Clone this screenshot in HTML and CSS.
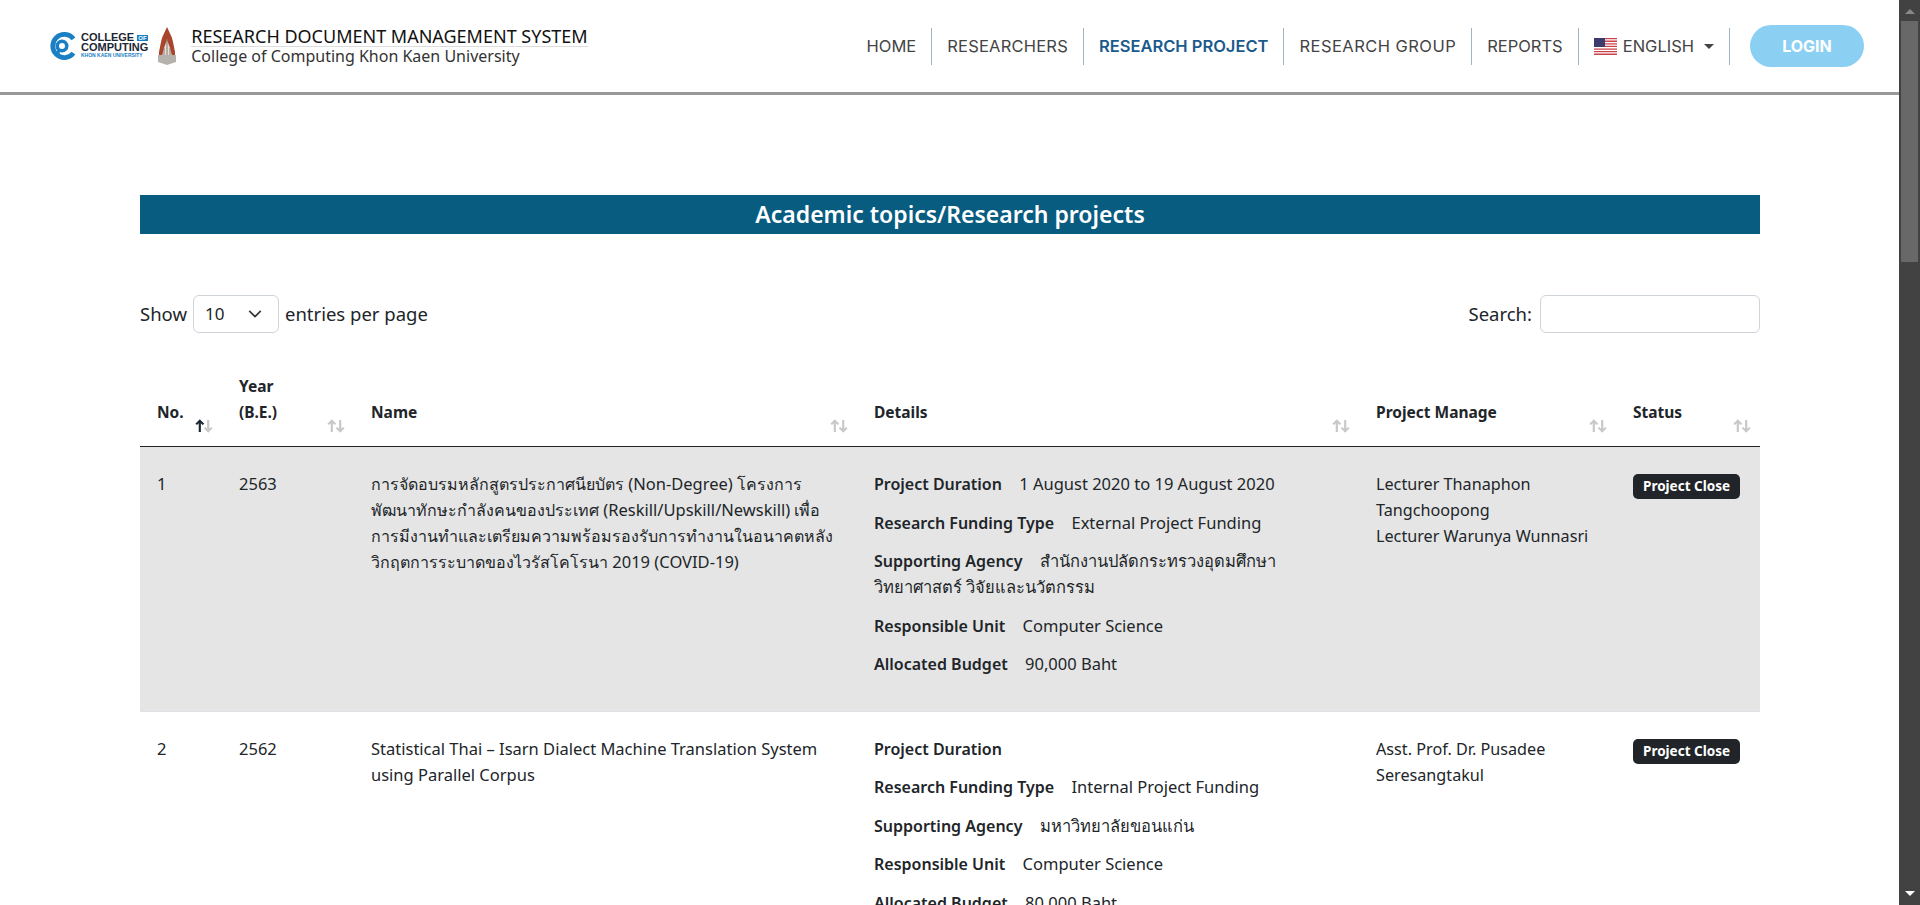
FILE: index.html
```html
<!DOCTYPE html>
<html lang="en">
<head>
  <meta charset="UTF-8" />
  <meta name="viewport" content="width=device-width, initial-scale=1.0" />
  <title>Research Document Management System</title>
  <link rel="stylesheet" href="styles.css">
</head>
<body>
  <header class="topbar">
    <div class="brand">
      <svg class="logo-ring" width="30" height="28" viewBox="0 0 29 27">
        <path d="M25.6 6.6 A11.2 11.2 0 1 0 25.6 20.4" fill="none" stroke="#1b7fc4" stroke-width="4.6"/>
        <circle cx="14.5" cy="13.5" r="4.6" fill="none" stroke="#1b7fc4" stroke-width="3.4"/>
        <path d="M11 17 L11 22" stroke="#1b7fc4" stroke-width="2.6"/>
      </svg>
      <div class="logo-words">
        <span class="logo-line">COLLEGE <em>OF</em></span>
        <span class="logo-line">COMPUTING</span>
        <span class="logo-sub">KHON KAEN UNIVERSITY</span>
      </div>
      <svg class="logo-temple" width="18" height="38" viewBox="0 0 18 38">
        <path d="M9 0 C11 5 14 9 15 15 L17 25 L17 31 L1 31 L1 25 L3 15 C4 9 7 5 9 0 Z" fill="#a9452c"/>
        <path d="M9 13 L12 21 L14 29 L4 29 L6 21 Z" fill="#e6dfd6"/>
        <path d="M9 12 V29 M6 21 V29 M12 21 V29" stroke="#85786e" stroke-width="1"/>
        <path d="M0 28 H18 V35 L9 38 L0 35 Z" fill="#b5b2ad"/>
      </svg>
      <div class="brand-text">
        <div class="brand-title">RESEARCH DOCUMENT MANAGEMENT SYSTEM</div>
        <div class="brand-sub">College of Computing Khon Kaen University</div>
      </div>
    </div>
    <nav class="mainnav">
      <a class="navlink" href="#">HOME</a>
      <a class="navlink researchers" href="#">RESEARCHERS</a>
      <a class="navlink active" href="#">RESEARCH PROJECT</a>
      <a class="navlink group" href="#">RESEARCH GROUP</a>
      <a class="navlink" href="#">REPORTS</a>
      <a class="navlink lang" href="#">
        <svg width="23" height="17" viewBox="0 0 23 17">
          <rect width="23" height="17" fill="#fff"/>
          <path d="M0 .65H23M0 3.25H23M0 5.85H23M0 8.45H23M0 11.05H23M0 13.65H23M0 16.25H23" stroke="#c9434f" stroke-width="1.3"/>
          <rect width="11" height="9" fill="#3c3b6e"/>
        </svg>
        ENGLISH <span class="caret"></span>
      </a>
    </nav>
    <button class="loginbtn" type="button">LOGIN</button>
  </header>

  <main class="content">
    <h1 class="pagetitle">Academic topics/Research projects</h1>

    <div class="tools">
      <label class="perpage">Show
        <span class="fakeselect">10
          <svg width="14" height="14" viewBox="0 0 16 16"><path d="M2 5l6 6 6-6" fill="none" stroke="#343a40" stroke-width="2" stroke-linecap="round" stroke-linejoin="round"/></svg>
        </span>
        entries per page</label>
      <label class="search">Search: <input type="text" /></label>
    </div>

    <table class="projects">
      <thead>
        <tr>
          <th class="col-no">No.
            <svg class="sort" width="18" height="14" viewBox="0 0 15 13" preserveAspectRatio="none"><path class="up on" d="M4 12V2M1 5l3-3.5L7 5"/><path class="down" d="M11 1v10M8 8l3 3.5L14 8"/></svg>
          </th>
          <th class="col-year">Year (B.E.)
            <svg class="sort" width="18" height="14" viewBox="0 0 15 13" preserveAspectRatio="none"><path class="up" d="M4 12V2M1 5l3-3.5L7 5"/><path class="down" d="M11 1v10M8 8l3 3.5L14 8"/></svg>
          </th>
          <th class="col-name">Name
            <svg class="sort" width="18" height="14" viewBox="0 0 15 13" preserveAspectRatio="none"><path class="up" d="M4 12V2M1 5l3-3.5L7 5"/><path class="down" d="M11 1v10M8 8l3 3.5L14 8"/></svg>
          </th>
          <th class="col-details">Details
            <svg class="sort" width="18" height="14" viewBox="0 0 15 13" preserveAspectRatio="none"><path class="up" d="M4 12V2M1 5l3-3.5L7 5"/><path class="down" d="M11 1v10M8 8l3 3.5L14 8"/></svg>
          </th>
          <th class="col-manage">Project Manage
            <svg class="sort" width="18" height="14" viewBox="0 0 15 13" preserveAspectRatio="none"><path class="up" d="M4 12V2M1 5l3-3.5L7 5"/><path class="down" d="M11 1v10M8 8l3 3.5L14 8"/></svg>
          </th>
          <th class="col-status">Status
            <svg class="sort" width="18" height="14" viewBox="0 0 15 13" preserveAspectRatio="none"><path class="up" d="M4 12V2M1 5l3-3.5L7 5"/><path class="down" d="M11 1v10M8 8l3 3.5L14 8"/></svg>
          </th>
        </tr>
      </thead>
      <tbody>
        <tr class="odd">
          <td>1</td>
          <td>2563</td>
          <td class="name-lines"><span class="th">การจัดอบรมหลักสูตรประกาศนียบัตร</span> (Non-Degree) <span class="th">โครงการ</span><br>
            <span class="th">พัฒนาทักษะกำลังคนของประเทศ</span> (Reskill/Upskill/Newskill) <span class="th">เพื่อ</span><br>
            <span class="th">การมีงานทำและเตรียมความพร้อมรองรับการทำงานในอนาคตหลัง</span><br>
            <span class="th">วิกฤตการระบาดของไวรัสโคโรนา</span> 2019 (COVID-19)</td>
          <td>
            <p><b>Project Duration</b> 1 August 2020 to 19 August 2020</p>
            <p><b>Research Funding Type</b> External Project Funding</p>
            <p><b>Supporting Agency</b> <span class="th">สำนักงานปลัดกระทรวงอุดมศึกษา<br>วิทยาศาสตร์ วิจัยและนวัตกรรม</span></p>
            <p><b>Responsible Unit</b> Computer Science</p>
            <p><b>Allocated Budget</b> 90,000 Baht</p>
          </td>
          <td class="manager">Lecturer Thanaphon Tangchoopong<br>Lecturer Warunya Wunnasri</td>
          <td><span class="badge">Project Close</span></td>
        </tr>
        <tr>
          <td>2</td>
          <td>2562</td>
          <td>Statistical Thai – Isarn Dialect Machine Translation System using Parallel Corpus</td>
          <td>
            <p><b>Project Duration</b></p>
            <p><b>Research Funding Type</b> Internal Project Funding</p>
            <p><b>Supporting Agency</b> <span class="th">มหาวิทยาลัยขอนแก่น</span></p>
            <p><b>Responsible Unit</b> Computer Science</p>
            <p><b>Allocated Budget</b> 80,000 Baht</p>
          </td>
          <td class="manager">Asst. Prof. Dr. Pusadee Seresangtakul</td>
          <td><span class="badge">Project Close</span></td>
        </tr>
      </tbody>
    </table>
  </main>

  <div class="scrollbar">
    <span class="sb-up"></span>
    <span class="sb-thumb"></span>
    <span class="sb-down"></span>
  </div>
</body>
</html>
```

FILE: styles.css
```css
html { height: 100%; }
body { margin: 0; padding-right: 21px; font-family: "Noto Sans", "Noto Sans CJK SC", sans-serif; font-size: 16.5px; line-height: 1.5; color: #212529; background: #fff; }

.topbar { display: flex; align-items: center; height: 92px; padding: 0 35px 0 47px; border-bottom: 3px solid #999; }
.brand { display: flex; align-items: center; flex: 1; }
.logo-words { display: flex; flex-direction: column; margin-left: 4px; font-family: "Liberation Sans", sans-serif; font-weight: bold; color: #1d2733; line-height: 9px; font-size: 11px; }
.logo-line em { font-style: normal; font-size: 6px; color: #fff; background: #1b7fc4; padding: 0 1px; vertical-align: 1px; }
.logo-sub { font-size: 5px; line-height: 7px; color: #1b7fc4; white-space: nowrap; }
.logo-temple { margin: 0 15px 0 10px; }
.brand-title { font-size: 18px; line-height: 19px; color: #111; border-bottom: 1px solid #ddd; }
.brand-sub { font-size: 16px; line-height: 18px; color: #333; }

.mainnav { display: flex; align-items: center; }
.navlink { display: flex; align-items: center; height: 37px; padding: 0 15px; border-right: 1px solid #9db4c4; color: #444; font-family: Inter, sans-serif; font-size: 16.5px; text-decoration: none; }
.navlink.active { color: #1a5a8c; font-weight: 600; }
.navlink.researchers { letter-spacing: .2px; }
.navlink.group { letter-spacing: .45px; }
.lang svg { margin-right: 6px; }
.caret { margin-left: 10px; border-top: 5px solid #444; border-left: 5px solid transparent; border-right: 5px solid transparent; }
.loginbtn { width: 114px; height: 42px; margin-left: 20px; border: none; border-radius: 21px; background: #8bd0f2; color: #fff; font-family: Inter, sans-serif; font-size: 16px; font-weight: 700; }

.content { padding: 100px 139px 0 140px; }
.pagetitle { margin: 0; height: 39px; background: #085c80; color: #fff; font-size: 23px; font-weight: 600; line-height: 39px; text-align: center; }
.tools { display: flex; justify-content: space-between; align-items: center; margin-top: 61px; }
.perpage, .search { display: flex; align-items: center; gap: 6px; font-size: 18.5px; }
.search { gap: 8px; }
.fakeselect { display: flex; align-items: center; justify-content: space-between; box-sizing: border-box; width: 86px; height: 38px; padding: 0 16px 0 11px; border: 1px solid #ced4da; border-radius: 6px; font-size: 17px; }
.search input { box-sizing: border-box; width: 220px; height: 38px; border: 1px solid #ced4da; border-radius: 6px; }

.projects { width: 100%; margin-top: 32px; border-collapse: collapse; table-layout: fixed; }
.projects th { position: relative; box-sizing: border-box; padding: 8px 40px 21px 17px; border-bottom: 1px solid #212529; font-size: 15.5px; font-weight: 700; text-align: left; vertical-align: bottom; line-height: 26px; }
.sort { position: absolute; right: 9px; bottom: 13px; }
.sort path { fill: none; stroke: #c8c8c8; stroke-width: 1.8; }
.sort path.on { stroke: #1d2733; }
.col-no { width: 82px; }
.col-year { width: 132px; }
.col-name { width: 503px; }
.col-details { width: 502px; }
.col-manage { width: 257px; }
.projects td { padding: 24px 17px 21px; border-bottom: 1px solid #dee2e6; vertical-align: top; line-height: 26px; }
.projects td.name-lines { white-space: nowrap; }
.projects td.manager { font-size: 16.2px; }
.odd td { background: #e5e5e5; }
.projects p { margin: 0 0 12.5px; }
.projects p b { margin-right: 13px; font-size: 16px; font-weight: 600; }
.th { font-size: 16px; }
.projects p .th { font-size: 16.5px; }
.badge { display: inline-block; margin-top: 3px; padding: 3px 10px; border-radius: 5px; background: #212529; color: #fff; font-size: 13.5px; font-weight: 700; line-height: 19px; vertical-align: top; }

.scrollbar { position: fixed; top: 0; right: 0; bottom: 0; width: 21px; background: #424242; }
.sb-thumb { position: absolute; top: 21px; left: 2px; width: 17px; height: 241px; background: #686868; }
.sb-up { position: absolute; top: 9px; left: 6px; border-bottom: 5px solid #888; border-left: 5px solid transparent; border-right: 5px solid transparent; }
.sb-down { position: absolute; bottom: 9px; left: 6px; border-top: 5px solid #fff; border-left: 5px solid transparent; border-right: 5px solid transparent; }
```
